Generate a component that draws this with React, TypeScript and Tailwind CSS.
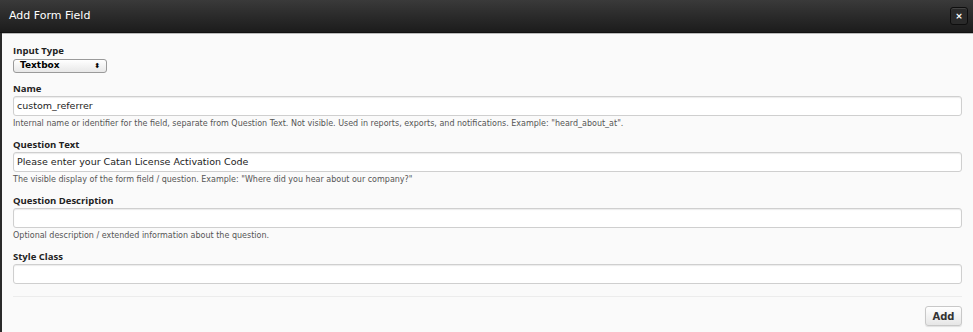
const labelCls = 'text-[9.5px] font-bold text-[#222] leading-[13px]';
const inputCls =
  'mt-[1px] h-[20px] rounded-[3px] border border-[#cfcfcf] bg-white shadow-[inset_0_1px_1px_rgba(0,0,0,0.08)] flex items-center px-[3px] text-[9.5px] text-[#222]';
const helpCls = 'mt-[2px] text-[8px] text-[#555] leading-[12px]';

export default function App() {
  const font = { fontFamily: '"DejaVu Sans", "Liberation Sans", sans-serif' };
  const labelFont = { fontFamily: '"Open Sans", "DejaVu Sans", sans-serif' };
  return (
    <div className="w-[973px] h-[332px] flex flex-col bg-[#fafafa] overflow-hidden" style={font}>
      <div className="h-[33px] shrink-0 flex items-center justify-between pl-[9px] pr-[5px] bg-gradient-to-b from-[#3a3a3a] to-[#1c1c1c] border-b border-[#111] shadow-[0_1px_0_#bbb]">
        <span className="text-[11px] text-white">Add Form Field</span>
        <button className="w-[18px] h-[18px] rounded-[3px] border border-[#0e0e0e] bg-[#2a2a2a] shadow-[inset_0_1px_0_#444] flex items-center justify-center text-white text-[9px] font-bold leading-none">
          ×
        </button>
      </div>
      <div className="flex-1 flex flex-col border-l-2 border-[#2a2a2a] pl-[11px] pr-[11px] pt-[11px]">
        <label className={labelCls} style={labelFont}>Input Type</label>
        <div className="mt-[2px] w-[94px] h-[14px] rounded-[3px] border border-[#9a9a9a] bg-gradient-to-b from-white to-[#e8e8e8] flex items-center justify-between px-[6px] text-[9px] font-bold text-black">
          <span>Textbox</span>
          <span className="text-[7px]">⬍</span>
        </div>

        <label className={`mt-[9px] ${labelCls}`} style={labelFont}>Name</label>
        <div className={inputCls}>custom_referrer</div>
        <p className={helpCls}>
          Internal name or identifier for the field, separate from Question Text. Not visible. Used in reports, exports, and notifications. Example: "heard_about_at".
        </p>

        <label className={`mt-[8px] ${labelCls}`} style={labelFont}>Question Text</label>
        <div className={inputCls}>Please enter your Catan License Activation Code</div>
        <p className={helpCls}>
          The visible display of the form field / question. Example: "Where did you hear about our company?"
        </p>

        <label className={`mt-[8px] ${labelCls}`} style={labelFont}>Question Description</label>
        <div className={inputCls} />
        <p className={helpCls}>Optional description / extended information about the question.</p>

        <label className={`mt-[8px] ${labelCls}`} style={labelFont}>Style Class</label>
        <div className={inputCls} />

        <div className="mt-[12px] border-t border-[#ececec]" />
        <div className="mt-[9px] flex justify-end">
          <button className="w-[37px] h-[20px] rounded-[3px] border border-[#c8c8c8] bg-gradient-to-b from-white to-[#e6e6e6] shadow-[0_1px_1px_rgba(0,0,0,0.1)] text-[10px] font-bold text-[#333]">
            Add
          </button>
        </div>
      </div>
    </div>
  );
}
